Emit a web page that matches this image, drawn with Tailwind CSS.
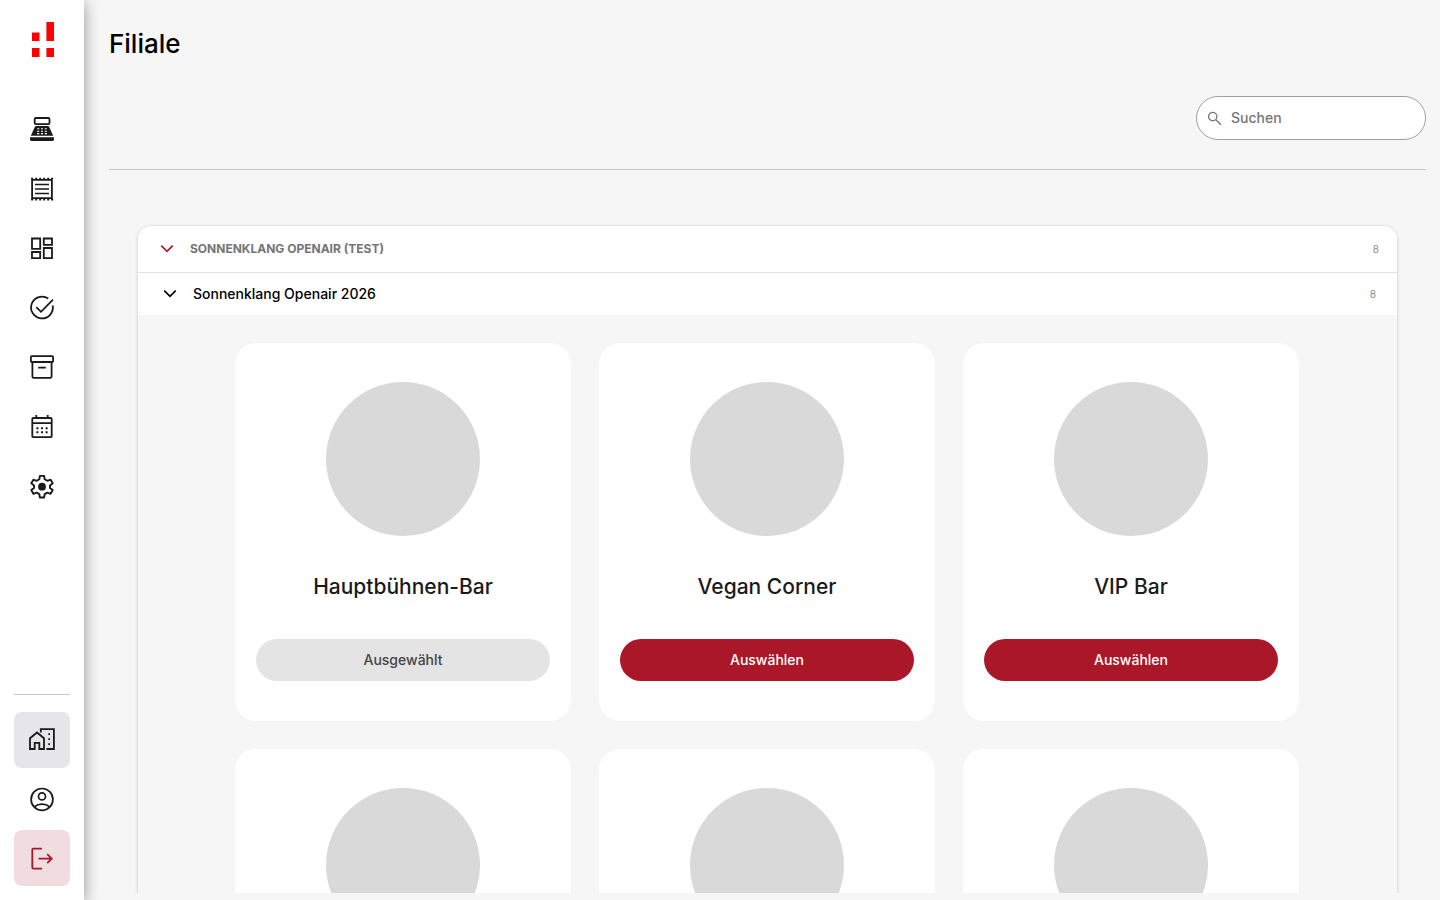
<!DOCTYPE html>
<html lang="de">
<head>
    <meta charset="UTF-8">
    <meta name="viewport" content="width=device-width, initial-scale=1.0">
    <title>Filiale</title>
    <script src="https://cdn.jsdelivr.net/npm/@tailwindcss/browser@4"></script>
</head>
<body class="flex h-screen overflow-hidden bg-[#f6f6f6] font-['Inter',sans-serif] text-[#1a1a1a]">
    <!-- Sidebar -->
    <aside class="relative z-10 flex w-21 shrink-0 flex-col items-center bg-white pt-5 pb-3.5 shadow-[0_3px_15px_rgba(0,0,0,0.4)]">
        <a href="#" aria-label="Startseite" class="block">
            <svg class="block h-10 w-7" viewBox="0 0 28 40" fill="#ff0000">
                <path d="M18.4 2H26v19h-7.6zM4 12.5h7.5V21H4zM4 28h7.5v9H4zM18.4 28H26v9h-7.6z"/>
            </svg>
        </a>

        <nav class="mt-[41px] flex h-[414px] flex-col justify-between">
            <a href="#" aria-label="Kasse" class="flex size-14 items-center justify-center rounded-lg">
                <svg class="size-7" viewBox="0 0 28 28" fill="#1a1a1a">
                    <rect x="6.7" y="3" width="14.8" height="6.2" rx="1.2" fill="none" stroke="#1a1a1a" stroke-width="1.8"/>
                    <path d="M8.3 11h11.4c.7 0 1.2.3 1.5 1l4 8.700H2.800l4-8.700c.3-.7.8-1 1.500-1zM2 22.200h24v2c0 1.100-.7 1.800-1.800 1.800H3.800C2.700 26 2 25.300 2 24.200z"/>
                    <path d="M9.300 13.800h2M13 13.800h2M16.700 13.800h2M9.100 16.300h2.200M13 16.300h2M16.700 16.300h2.200M9.100 18.600h2.200M13 18.600h2M16.700 18.600h2.200" stroke="#fff" stroke-width="1.100"/>
                </svg>
            </a>
            <a href="#" aria-label="Belege" class="flex size-14 items-center justify-center rounded-lg">
                <svg class="size-7" viewBox="0 0 28 28" fill="none" stroke="#1a1a1a" stroke-width="1.800">
                    <path d="M4.100 3v22M23.900 3v22M4 4.800h20M4 23.200h20"/>
                    <path d="M3.200 3.400h22M3.200 24.700h22" stroke-width="1.400" stroke-dasharray="2 2"/>
                    <path d="M7 9.500h14M7 14h14M7 18.500h14" stroke-width="1.600"/>
                </svg>
            </a>
            <a href="#" aria-label="Dashboard" class="flex size-14 items-center justify-center rounded-lg">
                <svg class="size-7" viewBox="0 0 28 28" fill="none" stroke="#1a1a1a" stroke-width="1.800">
                    <path d="M4 4.500h8.200v10.300H4zM15.800 4.500H24v6.300h-8.200zM4 18h8.200v6.200H4zM15.800 14H24v10.200h-8.200z"/>
                </svg>
            </a>
            <a href="#" aria-label="Aufgaben" class="flex size-14 items-center justify-center rounded-lg">
                <svg class="size-7" viewBox="0 0 28 28" fill="none" stroke="#1a1a1a" stroke-width="1.800">
                    <path d="M20.300 4.600A10.900 10.900 0 1 0 24.700 11.500"/>
                    <path d="M8.300 13.100l4.700 4.700L25 5.700"/>
                </svg>
            </a>
            <a href="#" aria-label="Archiv" class="flex size-14 items-center justify-center rounded-lg">
                <svg class="size-7" viewBox="0 0 28 28" fill="none" stroke="#1a1a1a" stroke-width="1.800">
                    <rect x="2.900" y="2.200" width="22.200" height="5.800" rx="1"/>
                    <path d="M4.400 8v14.500c0 .9.500 1.300 1.300 1.300h16.600c.8 0 1.300-.4 1.300-1.300V8M10.200 13.600h7.600"/>
                </svg>
            </a>
            <a href="#" aria-label="Kalender" class="flex size-14 items-center justify-center rounded-lg">
                <svg class="size-7" viewBox="0 0 28 28" fill="none" stroke="#1a1a1a" stroke-width="1.800">
                    <rect x="4.300" y="5" width="19.400" height="19.200" rx="1"/>
                    <path d="M4.300 10.200h19.400M8.300 2v3M19.700 2v3"/>
                    <path d="M8.400 15.200h2M13 15.200h2M17.600 15.200h2M8.400 19.200h2M13 19.200h2M17.600 19.200h2" stroke-width="2"/>
                </svg>
            </a>
            <a href="#" aria-label="Einstellungen" class="flex size-14 items-center justify-center rounded-lg">
                <svg class="size-7" viewBox="0 0 28 28" fill="none" stroke="#1a1a1a" stroke-width="1.900" stroke-linejoin="round">
                    <path d="M11.900 2.900h4.200l.6 3.400 2.600 1.500 3.300-1.200 2.100 3.700-2.700 2.100v2.600l2.700 2.100-2.100 3.700-3.300-1.200-2.600 1.500-.6 3.400h-4.200l-.6-3.400-2.600-1.500-3.300 1.200-2.100-3.700L6 15v-2.600l-2.700-2.100 2.100-3.700 3.300 1.200 2.600-1.500z"/>
                    <circle cx="14" cy="13.700" r="3.900" fill="#1a1a1a" stroke="none"/>
                </svg>
            </a>
        </nav>

        <div class="mt-auto flex flex-col gap-[3px] border-t border-[#c8c8c8] pt-[17px]">
            <a href="#" aria-label="Filiale" class="flex size-14 items-center justify-center rounded-lg bg-[#e5e5eb]">
                <svg class="size-7" viewBox="0 0 28 28" fill="none" stroke="#1a1a1a" stroke-width="1.800">
                    <path d="M2 23V12.200L9 6.500l7 5.700V23h-4.700v-6.200H6.700V23z"/>
                    <path d="M12.800 6.500V3.100h13.100V23h-7.500"/>
                    <path d="M20.300 8.200h1.700M20.300 13.200h1.700M20.300 18.200h1.700"/>
                </svg>
            </a>
            <a href="#" aria-label="Profil" class="flex size-14 items-center justify-center rounded-lg">
                <svg class="size-7" viewBox="0 0 28 28" fill="none" stroke="#1a1a1a" stroke-width="1.700">
                    <circle cx="14" cy="14.400" r="10.900"/>
                    <circle cx="14" cy="11.400" r="3.500"/>
                    <path d="M6.300 21.800c2-1.700 4.700-2.700 7.700-2.700s5.700 1 7.700 2.700"/>
                </svg>
            </a>
            <button type="button" aria-label="Abmelden" class="flex size-14 items-center justify-center rounded-lg bg-[#f1dddf]">
                <svg class="size-7" viewBox="0 0 28 28" fill="none" stroke="#aa1729" stroke-width="1.800">
                    <path d="M14 4.700H5.300c-.7 0-1 .3-1 1v17.900c0 .7.300 1 1 1H14"/>
                    <path d="M10.500 14.700H23M19.200 10.200l4.500 4.500-4.500 4.500"/>
                </svg>
            </button>
        </div>
    </aside>

    <!-- Content -->
    <main class="flex min-w-0 flex-1 flex-col overflow-hidden pt-6 pr-3.5 pb-[7px] pl-[25px]">
        <h1 class="text-[26px] leading-10 font-medium text-black">Filiale</h1>

        <div class="mt-8 flex justify-end border-b border-[#c8c8c8] pb-[29px]">
            <label class="flex h-11 w-[230px] items-center gap-2 rounded-full border border-[#a0a0a0] bg-white px-2.5">
                <svg class="size-4 shrink-0" viewBox="0 0 16 16" fill="none" stroke="#757575" stroke-width="1.300">
                    <circle cx="5.700" cy="6.600" r="4.200"/>
                    <path d="M8.900 9.800l5 5"/>
                </svg>
                <input type="search" placeholder="Suchen" aria-label="Suchen" class="min-w-0 flex-1 bg-transparent text-sm font-medium outline-none placeholder:text-[#757575]">
            </label>
        </div>

        <div class="min-h-0 flex-1 overflow-hidden px-7 pt-[55px]">
            <section class="rounded-t-[14px] border border-[#e2e2e2] shadow-[0_1px_3px_rgba(0,0,0,0.12)]">
                <button type="button" class="flex h-[46px] w-full items-center rounded-t-[13px] bg-white pr-[18px] pl-[22px]">
                    <svg class="size-3.5" viewBox="0 0 14 14" fill="none" stroke="#aa1729" stroke-width="1.700"><path d="M1.300 3.700L7 9.400l5.700-5.700"/></svg>
                    <span class="ml-4 text-xs font-bold text-[#757575]">SONNENKLANG OPENAIR (TEST)</span>
                    <span class="ml-auto text-[10px] text-[#8c8c8c]">8</span>
                </button>
                <button type="button" class="flex h-[43px] w-full items-center border-t border-[#e2e2e2] bg-white pr-[21px] pl-[25px]">
                    <svg class="size-3.5" viewBox="0 0 14 14" fill="none" stroke="#000" stroke-width="1.700"><path d="M1.300 3.700L7 9.400l5.700-5.700"/></svg>
                    <span class="ml-4 text-sm font-medium text-black">Sonnenklang Openair 2026</span>
                    <span class="ml-auto text-[10px] text-[#8c8c8c]">8</span>
                </button>

                <div class="grid grid-cols-[repeat(auto-fill,336px)] justify-center gap-7 py-7 pr-px">
                    <article class="flex flex-col items-center rounded-[21px] bg-white px-[21px] pt-[39px] pb-10">
                        <div class="size-[154px] rounded-full bg-[#d9d9d9]"></div>
                        <h2 class="mt-9 text-[21px] leading-[30px] font-medium">Hauptbühnen-Bar</h2>
                        <button type="button" class="mt-[37px] h-[42px] w-full rounded-full bg-[#e4e4e4] text-sm font-medium text-[#444444]">Ausgewählt</button>
                    </article>
                    <article class="flex flex-col items-center rounded-[21px] bg-white px-[21px] pt-[39px] pb-10">
                        <div class="size-[154px] rounded-full bg-[#d9d9d9]"></div>
                        <h2 class="mt-9 text-[21px] leading-[30px] font-medium">Vegan Corner</h2>
                        <button type="button" class="mt-[37px] h-[42px] w-full rounded-full bg-[#aa1729] text-sm font-medium text-white">Auswählen</button>
                    </article>
                    <article class="flex flex-col items-center rounded-[21px] bg-white px-[21px] pt-[39px] pb-10">
                        <div class="size-[154px] rounded-full bg-[#d9d9d9]"></div>
                        <h2 class="mt-9 text-[21px] leading-[30px] font-medium">VIP Bar</h2>
                        <button type="button" class="mt-[37px] h-[42px] w-full rounded-full bg-[#aa1729] text-sm font-medium text-white">Auswählen</button>
                    </article>
                    <article class="flex flex-col items-center rounded-[21px] bg-white px-[21px] pt-[39px] pb-10">
                        <div class="size-[154px] rounded-full bg-[#d9d9d9]"></div>
                    </article>
                    <article class="flex flex-col items-center rounded-[21px] bg-white px-[21px] pt-[39px] pb-10">
                        <div class="size-[154px] rounded-full bg-[#d9d9d9]"></div>
                    </article>
                    <article class="flex flex-col items-center rounded-[21px] bg-white px-[21px] pt-[39px] pb-10">
                        <div class="size-[154px] rounded-full bg-[#d9d9d9]"></div>
                    </article>
                </div>
            </section>
        </div>
    </main>
</body>
</html>
